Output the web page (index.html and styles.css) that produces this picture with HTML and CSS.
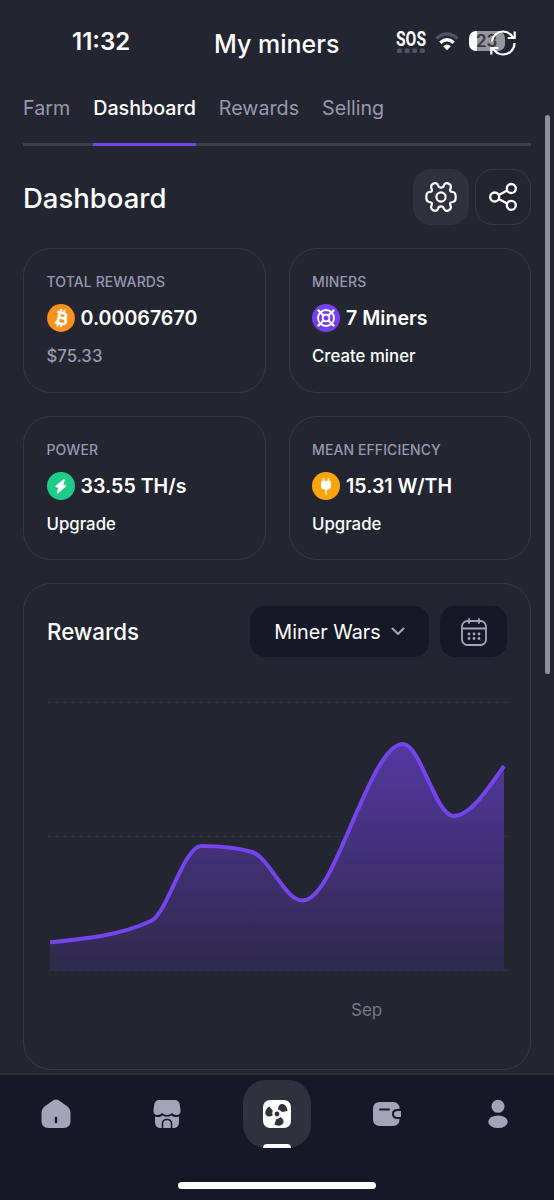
FILE: index.html
```html
<!DOCTYPE html>
<html lang="en">
<head>
  <meta charset="UTF-8">
  <meta name="viewport" content="width=device-width, initial-scale=1">
  <title>My miners</title>
  <link rel="stylesheet" href="styles.css">
</head>
<body>
  <header class="topbar">
    <span class="time">11:32</span>
    <h1>My miners</h1>
    <div class="status">
      <svg class="sos" width="31" height="28" viewBox="0 -4 31 28">
        <text x="0" y="15.500" textLength="30" lengthAdjust="spacingAndGlyphs">SOS</text>
        <g fill="#515360"><rect x="1" y="18.500" width="5" height="4.500" rx="1.500"/><rect x="8.600" y="18.500" width="5" height="4.500" rx="1.500"/><rect x="16.200" y="18.500" width="5" height="4.500" rx="1.500"/><rect x="23.800" y="18.500" width="5" height="4.500" rx="1.500"/></g>
      </svg>
      <svg class="wifi" width="24" height="19" viewBox="0 0 24 19" fill="none">
        <path d="M1.500 6.500Q12-2.500 22.500 6.500" stroke="#515360" stroke-width="3.400"/>
        <path d="M5.300 10.700Q12 4.800 18.700 10.700" stroke="#fff" stroke-width="3.400"/>
        <path d="M8.200 14.200Q12 10.800 15.800 14.200L12 18.300Z" fill="#fff"/>
      </svg>
      <div class="battery">
        <span>23</span>
        <svg class="refresh" width="28" height="28" viewBox="0 0 28 28" fill="none" stroke="#fff" stroke-width="2.200">
          <path d="M3 12.500C3.600 6.500 8.500 2.500 14 2.500c4.200 0 7.700 2.200 10 6M25.700 2.500V9h-7M25.500 14c0 6.500-5 11.500-11.500 11.500-4 0-7.500-2-10-6M2.300 25.500V19h7"/>
        </svg>
      </div>
    </div>
  </header>

  <nav class="tabs">
    <a>Farm</a>
    <a class="active">Dashboard</a>
    <a>Rewards</a>
    <a>Selling</a>
  </nav>

  <main>
    <div class="heading">
      <h2>Dashboard</h2>
      <button class="icon-btn filled" aria-label="Settings">
        <svg width="32" height="30" viewBox="0 0 32 30" fill="none" stroke="#fff" stroke-width="2.200" stroke-linejoin="round">
          <path d="M13.200 3.700C12.100.6 9.700.7 7.800 2 5.700 3.300 5.600 4.600 6.500 6.500 7.500 8.800 6.800 9.800 4.300 10 2.200 10.200 1.300 11.500 1.300 15s.9 4.800 3 5c2.500.2 3.200 1.200 2.200 3.500-.9 1.900-.8 3.200 1.300 4.500 1.900 1.300 4.300 1.400 5.400-1.700.7-2.600 4.900-2.600 5.600 0 1.100 3.100 3.500 3 5.400 1.700 2.100-1.300 2.200-2.600 1.300-4.500-1-2.300-.3-3.300 2.200-3.500 2.100-.2 3-1.500 3-5s-.9-4.800-3-5c-2.500-.2-3.200-1.200-2.200-3.500.9-1.900.8-3.200-1.300-4.500C22.300.7 19.900.6 18.800 3.700c-.7 2.600-4.900 2.600-5.600 0Z"/>
          <circle cx="16" cy="15" r="4.600"/>
        </svg>
      </button>
      <button class="icon-btn" aria-label="Share">
        <svg width="30" height="30" viewBox="0 0 30 30" fill="none" stroke="#fff" stroke-width="2.300">
          <circle cx="6.700" cy="15" r="4.500"/><circle cx="23.300" cy="6.500" r="4.500"/><circle cx="23.300" cy="23.300" r="4.500"/>
          <path d="M10.700 13 19.300 8.500M10.700 17l8.600 4.500"/>
        </svg>
      </button>
    </div>

    <section class="stats">
      <div class="card">
        <h3>TOTAL REWARDS</h3>
        <div class="value">
          <svg width="28" height="28" viewBox="0 0 28 28">
            <circle cx="14" cy="14" r="13.900" fill="#f7931a"/>
            <g transform="rotate(13 14 14)" fill="none" stroke="#fff">
              <path d="M9 8.800h6.300c4.300 0 4.300 5 0 5h-3.800 4.500c4.700 0 4.700 5.800 0 5.800H9M11.600 8.800v10.800" stroke-width="2.600"/>
              <path d="M12.300 5v3.500M15.700 5v3.500M12.300 19.500V23M15.700 19.500V23" stroke-width="1.900"/>
            </g>
          </svg>
          <span>0.00067670</span>
        </div>
        <p class="muted">$75.33</p>
      </div>
      <div class="card">
        <h3>MINERS</h3>
        <div class="value">
          <svg width="28" height="28" viewBox="0 0 28 28" fill="none" stroke="#fff">
            <circle cx="14" cy="14" r="14" fill="#7340f0" stroke="none"/>
            <circle cx="14" cy="14" r="8" stroke-width="1.800"/>
            <circle cx="14" cy="14" r="3.400" stroke-width="1.800"/>
            <path d="m6.500 6.500 5 5M21.500 6.500l-5 5M6.500 21.500l5-5M21.500 21.500l-5-5" stroke-width="2.400" stroke-linecap="round"/>
          </svg>
          <span>7 Miners</span>
        </div>
        <p>Create miner</p>
      </div>
      <div class="card">
        <h3>POWER</h3>
        <div class="value">
          <svg width="28" height="28" viewBox="0 0 28 28">
            <circle cx="14" cy="14" r="14" fill="#1dcb8b"/>
            <path d="m16.800 7.500-7.800 6.300c-.5.400-.4 1 .2 1.100l2.600.5-1.700 5.200c-.1.600.4.900.9.500l7.600-6.600c.5-.4.300-1-.3-1.100l-2.400-.5 1.600-4.900c.2-.5-.3-.8-.7-.5Z" fill="#fff" stroke="#fff" stroke-width=".7"/>
          </svg>
          <span>33.55 TH/s</span>
        </div>
        <p>Upgrade</p>
      </div>
      <div class="card">
        <h3>MEAN EFFICIENCY</h3>
        <div class="value">
          <svg width="28" height="28" viewBox="0 0 28 28">
            <circle cx="14" cy="14" r="14" fill="#fca509"/>
            <path d="M11.500 6.500v4M16.500 6.500v4M14 16v6" stroke="#fff" stroke-width="1.500" stroke-linecap="round"/>
            <path d="M10.500 8.800h7q1.500 0 1.500 1.500V14q0 3.500-3.500 3.500h-3Q9 17.500 9 14v-3.700Q9 8.800 10.500 8.800Z" fill="#fff"/>
          </svg>
          <span>15.31 W/TH</span>
        </div>
        <p>Upgrade</p>
      </div>
    </section>

    <section class="chart-card">
      <div class="chart-head">
        <h3>Rewards</h3>
        <button class="select">Miner Wars
          <svg width="14" height="9" viewBox="0 0 14 9" fill="none" stroke="#a5a5bb" stroke-width="2" stroke-linecap="round" stroke-linejoin="round"><path d="m1.500 1.500 5.500 5.500 5.500-5.500"/></svg>
        </button>
        <button class="calendar" aria-label="Pick dates">
          <svg width="26" height="28" viewBox="0 0 26 28" fill="none" stroke="#a5a5bb" stroke-width="1.800" stroke-linecap="round">
            <rect x="1" y="3" width="24" height="24" rx="5.500"/><path d="M1 10.500h24M8 1v4M18 1v4"/>
            <path d="M8 16h.01M13 16h.01M18 16h.01M8 20.500h.01M13 20.500h.01M18 20.500h.01" stroke-width="2.800"/>
          </svg>
        </button>
      </div>
      <svg class="chart" width="461" height="280" viewBox="47 695 461 280" fill="none">
        <defs>
          <linearGradient id="fill" x1="0" y1="744" x2="0" y2="971" gradientUnits="userSpaceOnUse">
            <stop offset="0" stop-color="#7544ec" stop-opacity=".6"/>
            <stop offset="1" stop-color="#7544ec" stop-opacity=".14"/>
          </linearGradient>
        </defs>
        <path d="M47 702.500h461M47 836.500h461M47 970.500h461" stroke="#2f313c" stroke-dasharray="4 4"/>
        <path fill="url(#fill)" d="M50 942.300C67 940.500 84 939 101 936C118 933 136 928 152 920.500C168 911 184 846 201.500 846C218 846 235 847 252 852C269 857 285 900.500 302.500 900.500C320 900.500 336 860 352.500 822C369 784 386 744 403 744C420 744 436 816 453.500 816C470 816 487 790 504 766V971H50Z"/>
        <path stroke="#7544ec" stroke-width="4" d="M50 942.300C67 940.500 84 939 101 936C118 933 136 928 152 920.500C168 911 184 846 201.500 846C218 846 235 847 252 852C269 857 285 900.500 302.500 900.500C320 900.500 336 860 352.500 822C369 784 386 744 403 744C420 744 436 816 453.500 816C470 816 487 790 504 766"/>
      </svg>
      <div class="axis"><span>Sep</span></div>
    </section>
  </main>

  <footer class="bottom">
    <nav>
      <a><svg width="30" height="30" viewBox="0 0 30 30"><path d="M12 1.500q3-2 6 0l8.500 6Q29.500 10 29.500 13v9q0 7-7 7h-15q-7 0-7-7v-9q0-3 3-5.500Z" fill="#a3a3ba"/><path d="M15 19v4" stroke="#171827" stroke-width="2.400" stroke-linecap="round"/></svg></a>
      <a><svg width="30" height="30" viewBox="0 0 30 30"><path d="M7 1h16q4 0 4.800 5l.7 5q.5 5-4 5-3 0-4.500-2-2 2-5 2t-5-2q-1.500 2-4.500 2-4.500 0-4-5L2.200 6Q3 1 7 1Z" fill="#a3a3ba"/><path d="M3 17.500q4.500 1.500 7.500-1 4.500 2.500 9 0 3 2.500 7.500 1V23q0 6-6 6H9q-6 0-6-6Z" fill="#a3a3ba"/><path d="M10.500 29v-4.500q0-4 4.500-4t4.500 4V29" fill="#a3a3ba" stroke="#171827" stroke-width="1.500"/></svg></a>
      <a class="current">
        <svg width="30" height="30" viewBox="0 0 30 30">
          <rect x="1" y="1" width="28" height="28" rx="7" fill="#fff"/>
          <g fill="#31313d"><circle cx="15" cy="15" r="2.400"/>
            <path id="blade" d="M16 10.500C16 6 19 4 22 5.500c2.500 1.500 3.500 4.500 3.500 6.500L20 13q-1.500-2-4-2.500Z"/>
            <use href="#blade" transform="rotate(120 15 15)"/><use href="#blade" transform="rotate(240 15 15)"/>
          </g>
        </svg>
      </a>
      <a><svg width="30" height="30" viewBox="0 0 30 30"><path d="M8 3h13q6.500 0 6.500 6.500v11q0 6.500-6.500 6.500H8q-7 0-7-7V10q0-7 7-7Z" fill="#a3a3ba"/><path d="M8 10.500h9" stroke="#171827" stroke-width="2" stroke-linecap="round"/><path d="M29 11h-3.500Q21 11 21 15t4.500 4H29" fill="#a3a3ba" stroke="#171827" stroke-width="2"/></svg></a>
      <a><svg width="30" height="30" viewBox="0 0 30 30" fill="#a3a3ba"><circle cx="15" cy="7.300" r="6.500"/><ellipse cx="15" cy="22.800" rx="9.800" ry="6.300"/></svg></a>
    </nav>
    <div class="home-bar"></div>
  </footer>
  <div class="scrollbar"></div>
</body>
</html>
```
FILE: styles.css
```css
:root {
  --bg: #232530;
  --dark: #171827;
  --line: #363844;
  --muted: #9998af;
  --accent: #7544ec;
}

* {
  box-sizing: border-box;
}

body {
  margin: 0;
  height: 1200px;
  display: flex;
  flex-direction: column;
  position: relative;
  overflow: hidden;
  background: var(--bg);
  color: #fff;
  font-family: Inter, sans-serif;
}

h1, h2, h3, p {
  margin: 0;
}

svg {
  display: block;
  flex: none;
}

button {
  font-family: inherit;
  color: inherit;
  border: none;
  padding: 0;
  display: flex;
  align-items: center;
  justify-content: center;
}

.topbar {
  height: 88px;
  padding: 0 37px 0 72px;
  display: grid;
  grid-template-columns: 142px 1fr 122px;
}

.time {
  font-size: 24px;
  font-weight: 600;
  line-height: 28px;
  padding-top: 28px;
}

.topbar h1 {
  font-size: 25px;
  font-weight: 500;
  line-height: 30px;
  padding-top: 29px;
  white-space: nowrap;
}

.status {
  display: flex;
  align-items: flex-start;
  padding-top: 30px;
  padding-left: 1px;
}

.sos {
  margin-top: -4px;
}

.sos text {
  font: bold 20px Roboto, sans-serif;
  fill: #fff;
}

.wifi {
  margin: 2px 10px 0 8px;
}

.battery {
  width: 36px;
  height: 20px;
  margin-top: 1px;
  flex: none;
  border-radius: 7px;
  background: linear-gradient(90deg, #fff 8px, #96969e 8px);
  color: #373844;
  font-size: 17px;
  font-weight: 600;
  line-height: 20px;
  padding-left: 7px;
  position: relative;
}

.refresh {
  position: absolute;
  left: 20px;
  top: -2px;
}

.tabs {
  height: 58px;
  margin: 0 23px;
  display: flex;
  gap: 23px;
  border-bottom: 3px solid #3d3f4b;
  font-size: 19.7px;
  line-height: 40px;
  color: var(--muted);
}

.tabs a {
  height: 58px;
}

.tabs .active {
  color: #fff;
  font-weight: 500;
  border-bottom: 3px solid var(--accent);
}

main {
  flex: 1;
  padding: 23px 23px 0;
}

.heading {
  display: flex;
  align-items: center;
  gap: 6px;
  height: 56px;
}

.heading h2 {
  flex: 1;
  font-size: 27.5px;
  font-weight: 500;
  padding-top: 2px;
}

.icon-btn {
  width: 56px;
  height: 56px;
  border-radius: 18px;
  background: var(--bg);
  border: 1.5px solid var(--line);
}

.icon-btn.filled {
  background: #2f313d;
  border-color: #2f313d;
}

.stats {
  display: grid;
  grid-template-columns: 1fr 1fr;
  gap: 23px;
  margin-top: 23px;
}

.card {
  height: 144.5px;
  border: 1.5px solid var(--line);
  border-radius: 28px;
  padding: 23px 22.5px;
}

.card h3 {
  font-size: 14px;
  font-weight: 500;
  line-height: 20px;
  letter-spacing: 0.1px;
  color: var(--muted);
}

.value {
  display: flex;
  align-items: center;
  gap: 6px;
  height: 28px;
  margin: 12px 0 13px;
  font-size: 19.6px;
  font-weight: 600;
  white-space: nowrap;
}

.card p {
  font-size: 16.8px;
  font-weight: 500;
  line-height: 22px;
}

.card .muted {
  color: var(--muted);
}

.chart-card {
  height: 487px;
  margin-top: 23px;
  border: 1.5px solid var(--line);
  border-radius: 28px;
  padding: 22px 23px;
}

.chart-head {
  display: flex;
  align-items: center;
  gap: 11px;
}

.chart-head h3 {
  flex: 1;
  font-size: 22.3px;
  font-weight: 500;
}

.select,
.calendar {
  height: 51px;
  border-radius: 15px;
  background: var(--dark);
}

.select {
  width: 179px;
  gap: 10px;
  font-size: 19.8px;
}

.calendar {
  width: 67px;
}

.chart {
  margin-top: 38px;
}

.axis {
  display: flex;
  padding: 23px 0 0 304px;
  font-size: 17px;
  line-height: 24px;
  color: #777986;
}

.bottom {
  height: 127px;
  flex: none;
  border-top: 2px solid #2d2e3a;
  background: var(--dark);
}

.bottom nav {
  height: 78px;
  padding: 5px 1px 0;
  display: grid;
  grid-template-columns: repeat(5, 1fr);
  justify-items: center;
}

.bottom a {
  width: 68px;
  height: 68px;
  display: flex;
  align-items: center;
  justify-content: center;
}

.bottom .current {
  background: #31313d;
  border-radius: 23px;
  position: relative;
}

.current::after {
  content: "";
  position: absolute;
  bottom: 0;
  left: 20px;
  width: 28px;
  height: 4px;
  border-radius: 4px 4px 0 0;
  background: #fff;
}

.home-bar {
  width: 198px;
  height: 7px;
  margin: 29px auto 0;
  border-radius: 4px;
  background: #fff;
}

/* scroll position marker floats over the page */
.scrollbar {
  position: absolute;
  right: 4px;
  top: 115px;
  width: 5px;
  height: 559px;
  border-radius: 3px;
  background: #91929d;
}
```
